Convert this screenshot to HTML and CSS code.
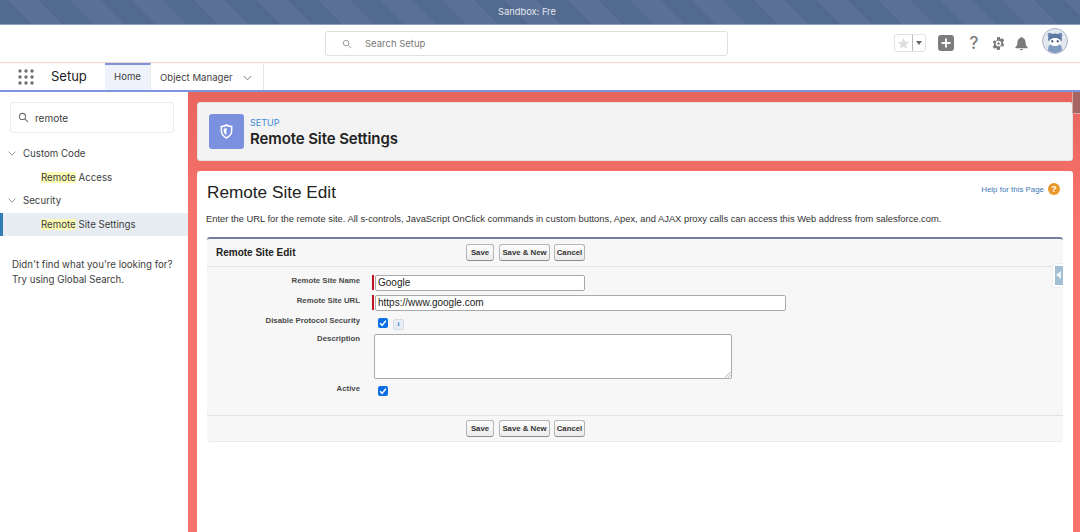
FILE: index.html
```html
<!DOCTYPE html>
<html lang="en">
<head>
<meta charset="utf-8">
<title>Remote Site Settings</title>
<link rel="stylesheet" href="styles.css">
</head>
<body>
<div class="sandbox">Sandbox: Fre</div>
<header class="globalbar">
  <div class="search"><svg class="ic-search" viewBox="0 0 16 16"><circle cx="6.5" cy="6.5" r="4.5"/><path d="M10 10l4.5 4.5"/></svg><span>Search Setup</span></div>
  <div class="tools">
    <div class="fav"><span class="fav-star"><svg viewBox="0 0 16 16"><path d="M8 1.2l2.1 4.6 5 .5-3.8 3.3 1.1 4.9L8 12l-4.4 2.5 1.1-4.9L.9 6.3l5-.5z"/></svg></span><span class="fav-caret"><i></i></span></div>
    <svg class="ic-plus" viewBox="0 0 16 16"><rect width="16" height="16" rx="3"/><path d="M8 3.5v9M3.5 8h9"/></svg>
    <span class="ic-help">?</span>
    <svg class="ic-gear" viewBox="0 0 16 16"><path fill-rule="evenodd" d="M6.6 1h2.8l.4 1.7 1.3.6 1.5-.8 1.5 2.4-1.3 1.1v1.9l1.4 1.2-1.5 2.4-1.6-.8-1.3.7L9.4 15H6.6l-.4-1.6-1.3-.7-1.6.8-1.5-2.4 1.4-1.2V8l-1.3-1.1 1.5-2.4 1.5.8 1.3-.6zM8 5a3 3 0 1 0 0 6 3 3 0 0 0 0-6z"/><circle cx="8" cy="8" r="1.3"/></svg>
    <svg class="ic-bell" viewBox="0 0 16 16"><path d="M8 1a1.2 1.2 0 0 1 1.2 1.2C11.3 2.800 12.300 4.500 12.300 6.500c0 3 .7 4 2.200 5.500v1h-13v-1C3 10.500 3.700 9.500 3.700 6.500c0-2 1-3.700 3.100-4.300A1.200 1.200 0 0 1 8 1z"/><path d="M6.300 13.800h3.400a1.700 1.500 0 0 1-3.400 0z"/></svg>
    <svg class="avatar" viewBox="0 0 26 26"><circle cx="13" cy="13" r="12.500" fill="#e3e8f0" stroke="#a9b3c4"/><circle cx="7.800" cy="7" r="2.200" fill="#6d8bb5"/><circle cx="18.200" cy="7" r="2.200" fill="#6d8bb5"/><path d="M6 22.500c.3-4 1-5.500 2.500-6.500h9c1.500 1 2.200 2.500 2.500 6.500a11.500 11.500 0 0 1-14 0z" fill="#7f9ac0"/><ellipse cx="13" cy="11" rx="7" ry="5.500" fill="#5d79a3"/><ellipse cx="13" cy="14" rx="6" ry="4" fill="#fff"/><circle cx="10.300" cy="13.300" r="1.100" fill="#27395a"/><circle cx="15.700" cy="13.300" r="1.100" fill="#27395a"/></svg>
  </div>
</header>
<nav class="appnav">
  <svg class="waffle" viewBox="0 0 16 16"><g><circle cx="2" cy="2" r="1.700"/><circle cx="8" cy="2" r="1.700"/><circle cx="14" cy="2" r="1.700"/><circle cx="2" cy="8" r="1.700"/><circle cx="8" cy="8" r="1.700"/><circle cx="14" cy="8" r="1.700"/><circle cx="2" cy="14" r="1.700"/><circle cx="8" cy="14" r="1.700"/><circle cx="14" cy="14" r="1.700"/></g></svg>
  <span class="appname">Setup</span>
  <a class="tab tab-active">Home</a>
  <a class="tab tab-om">Object Manager<svg class="chev-nav" viewBox="0 0 10 6"><path d="M.7.7L5 5 9.300.7"/></svg></a>
</nav>
<div class="layout">
  <aside class="sidebar">
    <div class="quickfind"><svg class="ic-search dark" viewBox="0 0 16 16"><circle cx="6.500" cy="6.500" r="4.500"/><path d="M10 10l4.500 4.500"/></svg><span>remote</span></div>
    <div class="tree-head"><svg class="chev" viewBox="0 0 10 6"><path d="M.7.7L5 5 9.300.7"/></svg>Custom Code</div>
    <div class="tree-leaf"><mark>Remote</mark> Access</div>
    <div class="tree-head"><svg class="chev" viewBox="0 0 10 6"><path d="M.7.7L5 5 9.300.7"/></svg>Security</div>
    <div class="tree-leaf leaf-active"><mark>Remote</mark> Site Settings</div>
    <p class="notfound">Didn't find what you're looking for?<br>Try using Global Search.</p>
  </aside>
  <main class="main">
    <span class="handle-top"></span>
    <section class="pagehead">
      <div class="pageicon"><svg viewBox="0 0 16 18"><path d="M8 1.200c2 1.300 4 1.800 6.200 1.800v5c0 4-2.500 6.800-6.200 8.800C4.300 14.800 1.800 12 1.800 8V3C4 3 6 2.500 8 1.200z" fill="none" stroke="#fff" stroke-width="1.800"/><path d="M8 4.500v8.800C5.800 12 4.600 10.300 4.600 8V5.800C5.800 5.700 7 5.200 8 4.500z" fill="#fff"/></svg></div>
      <div class="pagehead-text"><div class="eyebrow">SETUP</div><h1>Remote Site Settings</h1></div>
    </section>
    <section class="content">
      <div class="title-row"><h2>Remote Site Edit</h2><a class="help">Help for this Page<span class="help-dot">?</span></a></div>
      <p class="intro">Enter the URL for the remote site. All s-controls, JavaScript OnClick commands in custom buttons, Apex, and AJAX proxy calls can access this Web address from salesforce.com.</p>
      <div class="block">
        <span class="block-handle"><i></i></span>
        <div class="block-head">
          <h3>Remote Site Edit</h3>
          <div class="btns"><button>Save</button><button>Save &amp; New</button><button>Cancel</button></div>
        </div>
        <div class="form">
          <div class="row row-name"><label>Remote Site Name</label><span class="req"></span><input class="in in-name" value="Google"></div>
          <div class="row row-url"><label>Remote Site URL</label><span class="req"></span><input class="in in-url" value="https://www.google.com"></div>
          <div class="row row-proto"><label>Disable Protocol Security</label><span class="check"><svg viewBox="0 0 11 11"><path d="M2.300 5.800l2.200 2.300 4.200-5"/></svg></span><span class="info">i</span></div>
          <div class="row row-desc"><label>Description</label><span class="ta"><svg viewBox="0 0 7 7"><path d="M1 6.500L6.500 1M4 6.500L6.500 4"/></svg></span></div>
          <div class="row row-active"><label>Active</label><span class="check"><svg viewBox="0 0 11 11"><path d="M2.300 5.800l2.200 2.300 4.200-5"/></svg></span></div>
        </div>
        <div class="block-foot">
          <div class="btns"><button>Save</button><button>Save &amp; New</button><button>Cancel</button></div>
        </div>
      </div>
    </section>
  </main>
</div>
</body>
</html>
```
FILE: styles.css
```css
* { box-sizing: border-box; }
html, body { margin: 0; height: 532px; overflow: hidden; }
body { font-family: "Inter", "Liberation Sans", Arial, sans-serif; background: #fff; color: #2b2b2b; }

.sandbox {
  height: 25px;
  border-bottom: 1px solid #8f9fc0;
  background: repeating-linear-gradient(45deg, #536a8f 0 22px, #5a7096 22px 44px);
  color: #e4e8ef;
  font-size: 9.300px;
  line-height: 23px;
  text-align: center;
  padding-right: 26px;
}

.globalbar { height: 38px; border-bottom: 1px solid #f7cfcf; display: flex; position: relative; justify-content: center; padding: 6px 27px 0 0; background: #fff; }
.search { width: 403px; height: 25px; border: 1px solid #dfdfdf; border-radius: 3px; display: flex; align-items: center; padding-left: 16px; font-size: 9.500px; color: #777; }
.ic-search { width: 10px; height: 10px; margin-right: 13px; fill: none; stroke: #9a9a9a; stroke-width: 1.500; }
.ic-search.dark { width: 11px; height: 11px; margin-right: 6px; stroke: #6f6f6f; }
.tools { position: absolute; left: 894px; top: 4px; width: 184px; height: 28px; display: flex; align-items: center; }
.fav { width: 32px; height: 18px; display: flex; border: 1px solid #e3e3e3; border-radius: 3px; }
.fav-star { width: 18px; border-right: 1px solid #b9b9b9; display: flex; align-items: center; justify-content: center; }
.fav-star svg { width: 13px; height: 13px; fill: #dedede; }
.fav-caret { flex: 1; display: flex; align-items: center; justify-content: center; }
.fav-caret i { border-left: 3.500px solid transparent; border-right: 3.500px solid transparent; border-top: 4px solid #666; }
.ic-plus { width: 16px; height: 16px; margin-left: 12px; }
.ic-plus rect { fill: #7d7d7d; }
.ic-plus path { stroke: #fff; stroke-width: 1.800; fill: none; }
.ic-help { font-size: 17px; font-weight: 500; color: #7b7b7b; width: 12px; margin-left: 14px; text-align: center; line-height: 18px; }
.ic-gear { width: 15px; height: 15px; margin-left: 11px; fill: #7b7b7b; }
.ic-bell { width: 15px; height: 15px; margin-left: 8px; fill: #7b7b7b; }
.avatar { width: 26px; height: 26px; margin: -4px 0 0 13px; }

.appnav { height: 29px; border-bottom: 2px solid #7d93dd; display: flex; align-items: stretch; background: #fff; }
.waffle { width: 16px; height: 16px; margin: 6px 0 0 18px; fill: #6d6d6d; }
.appname { font-size: 13px; color: #222; margin-left: 17px; line-height: 27px; width: 54px; }
.tab { font-size: 9.600px; line-height: 24px; color: #3f3f3f; height: 27px; border-top: 2px solid transparent; }
.tab-active { width: 46px; text-align: center; background: #eff2fa; border-top-color: #7d93dd; border-right: 1px solid #eaeaea; }
.tab-om { width: 113px; padding-left: 9px; border-right: 1px solid #e6e6e6; display: flex; align-items: center; line-height: normal; }
.chev-nav { width: 9px; height: 6px; margin-left: 10px; fill: none; stroke: #666; stroke-width: 1; }

.layout { display: flex; height: 440px; }
.sidebar { width: 188px; flex: none; background: #fff; padding-top: 10px; font-size: 9.700px; color: #3d3d3d; }
.quickfind { width: 164px; height: 31px; margin: 0 0 9px 10px; border: 1px solid #ebebeb; border-radius: 3px; display: flex; align-items: center; padding-left: 7px; font-size: 10px; }
.tree-head { height: 23.500px; display: flex; align-items: center; padding-left: 8px; }
.chev { width: 8px; height: 5px; margin-right: 7px; fill: none; stroke: #777; stroke-width: 1; }
.tree-leaf { height: 23.500px; line-height: 23.500px; padding-left: 41px; }
.tree-leaf mark { background: #fbfbb6; color: inherit; }
.leaf-active { background: #e7edf3; border-left: 3px solid #2f7db1; padding-left: 38px; }
.notfound { margin: 22px 0 0 12px; line-height: 14.500px; font-size: 9.700px; }

.main { flex: 1; position: relative; background: linear-gradient(#e7655d, #f8736b 130px); padding: 10px 7px 0 9px; }
.handle-top { position: absolute; right: 0; top: 0; width: 8px; height: 22px; background: #a86663; border-left: 1px solid #d9a9a5; border-bottom: 1px solid #d9a9a5; }
.pagehead { height: 59px; background: #f3f3f3; border: 1px solid #e3e3e3; border-radius: 3px; display: flex; align-items: center; padding-left: 11px; }
.pageicon { width: 35px; height: 35px; background: #7b90de; border-radius: 3px; display: flex; align-items: center; justify-content: center; }
.pageicon svg { width: 15px; height: 15px; }
.pagehead-text { margin-left: 6px; }
.eyebrow { font-size: 9px; line-height: 11px; color: #3b8ad6; margin: 3px 0 1px; }
h1 { margin: 0; font-size: 15px; line-height: 20px; font-weight: 600; color: #222; letter-spacing: -.1px; }

.content { height: 361px; margin-top: 10px; background: #fff; border-radius: 3px 3px 0 0; padding: 0 10px; }
.title-row { display: flex; justify-content: space-between; height: 42px; }
h2 { margin: 11px 0 0; font-size: 17.200px; line-height: 20px; font-weight: 400; color: #222; font-family: "Liberation Sans", Arial, sans-serif; }
.help { font-size: 7.900px; color: #3f78b5; margin-top: 11px; height: 14px; display: flex; align-items: center; font-family: "Liberation Sans", Arial, sans-serif; margin-right: 3px; }
.help-dot { width: 12px; height: 12px; margin-left: 4px; border-radius: 50%; background: #e8992a; color: #fff; font-size: 9px; font-weight: 700; text-align: center; line-height: 12px; }
.intro { margin: 0 0 0 -1px; font-size: 9.350px; line-height: 12px; color: #333; font-family: "Liberation Sans", Arial, sans-serif; height: 18px; white-space: nowrap; }

.block { position: relative; width: 856px; height: 205px; margin-top: 6px; background: #f7f7f7; border-top: 2px solid #737f9f; border-radius: 3px; border-bottom: 1px solid #ececec; font-family: "Liberation Sans", Arial, sans-serif; }
.block-head { height: 28px; display: flex; align-items: center; border-bottom: 1px solid #e4e4e4; padding-left: 9px; }
h3 { margin: 0; width: 250px; font-size: 10px; font-weight: 700; color: #222; }
.btns { display: flex; gap: 5px; }
.btns button { height: 17px; width: 28px; padding: 0; white-space: nowrap; border: 1px solid #b5b5b5; border-bottom-color: #8f8f8f; border-radius: 3px; background: linear-gradient(#fdfdfd, #ececec); font: 700 7.800px "Liberation Sans", Arial, sans-serif; color: #333; }
.btns button:nth-child(2) { width: 51px; }
.btns button:last-child { width: 31px; margin-left: -1px; }

.form { height: 149px; padding-top: 8px; border-bottom: 1px solid #e2e2e2; }
.row { display: flex; position: relative; }
.row label { width: 153px; text-align: right; font-size: 7.800px; font-weight: 700; color: #4a4a4a; line-height: 11px; }
.req { width: 2px; height: 15px; background: #c0121f; margin: 0 1px 0 12px; }
.in { height: 16px; border: 1px solid #a9a9a9; border-radius: 2px; background: #fff; padding: 0 2px 2px; font: 10px "Liberation Sans", Arial, sans-serif; color: #222; outline: 0; }
.in-name { width: 210px; }
.in-url { width: 411px; }
.row-name { height: 20px; }
.row-url { height: 20px; }
.row-proto { height: 18px; }
.row-desc { height: 50px; }
.check { width: 10px; height: 10px; background: #0b6fe8; border-radius: 2px; margin: 3px 0 0 18px; display: block; }
.check svg { display: block; width: 10px; height: 10px; fill: none; stroke: #fff; stroke-width: 1.600; }
.info { width: 11px; height: 11px; margin: 4px 0 0 5px; background: #e8eef5; border: 1px solid #d3dbe6; border-radius: 2px; font: 700 7px/9px "Liberation Serif", serif; color: #3b7cc4; text-align: center; }
.ta { position: relative; width: 358px; height: 45px; margin: 1px 0 0 14px; border: 1px solid #aaa; border-radius: 2px; background: #fff; display: block; }
.ta svg { position: absolute; right: 0; bottom: 0; width: 7px; height: 7px; fill: none; stroke: #888; stroke-width: .7; }
.block-foot { height: 25px; padding: 4px 0 0 259px; }
.block-handle { position: absolute; right: 0; top: 24px; width: 11px; height: 25px; background: #fff; border: 1px solid #eee; border-right: 0; border-radius: 3px 0 0 3px; padding: 2px 0 0 2px; }
.block-handle i { position: relative; display: block; width: 8px; height: 19px; background: #a2bfd3; }
.block-handle i::before { content: ""; position: absolute; left: 1px; top: 5px; border-top: 4px solid transparent; border-bottom: 4px solid transparent; border-right: 5px solid #eef3f7; }
```
